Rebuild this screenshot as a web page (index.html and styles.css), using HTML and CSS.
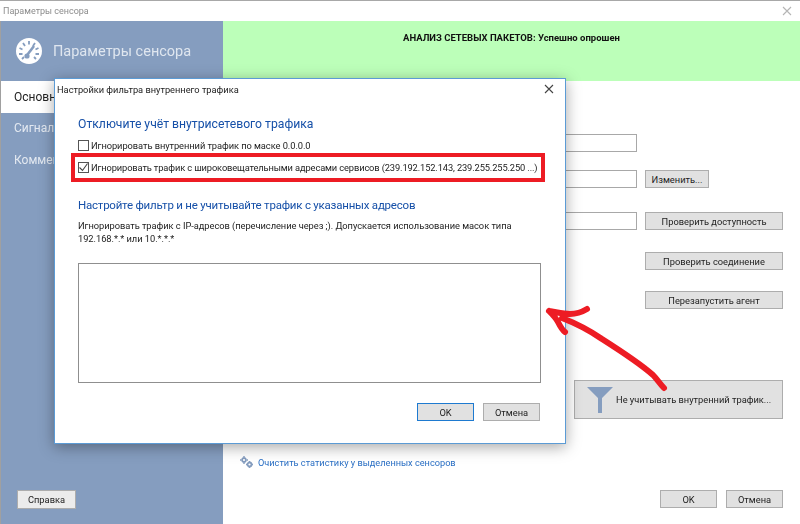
FILE: index.html
```html
<!DOCTYPE html>
<html lang="ru">
<head>
<meta charset="utf-8">
<title>Параметры сенсора</title>
<link rel="stylesheet" href="styles.css">
</head>
<body>
<div class="window">
  <div class="titlebar">
    <span>Параметры сенсора</span>
    <svg class="close-main" viewBox="0 0 10 10" width="10" height="10"><path d="M1 1l8 8M9 1l-8 8"/></svg>
  </div>
  <div class="main">
    <aside class="sidebar">
      <div class="side-head">
        <svg class="dial" viewBox="0 0 26 26" width="26" height="26">
          <circle cx="13" cy="13" r="13" fill="#fff"/>
          <path d="M13 3v3.500M7 5l2 3M3.500 10l3 1.500M3 16h3.500M19 5l-2 3M22.500 10l-3 1.500M23 16h-3.500M6 21l2-2M20 21l-2-2" stroke="#859dbf" stroke-width="1.800" fill="none"/>
          <path d="M10 18.500L18 8" stroke="#859dbf" stroke-width="2.600" fill="none"/>
          <circle cx="11" cy="18" r="2.600" fill="#859dbf"/>
        </svg>
        <span>Параметры сенсора</span>
      </div>
      <nav class="nav">
        <div class="nav-item active">Основные</div>
        <div class="nav-item">Сигналы</div>
        <div class="nav-item">Комментарии</div>
      </nav>
      <div class="side-foot"><button class="btn help">Справка</button></div>
    </aside>
    <section class="content">
      <div class="status">АНАЛИЗ СЕТЕВЫХ ПАКЕТОВ: Успешно опрошен</div>
      <div class="form">
        <div class="row row-a"><input class="field" type="text"></div>
        <div class="row row-b"><input class="field" type="text"><button class="btn change">Изменить...</button></div>
        <div class="row row-c"><input class="field" type="text"><button class="btn">Проверить доступность</button></div>
        <div class="row row-d"><span></span><button class="btn">Проверить соединение</button></div>
        <div class="row row-e"><span></span><button class="btn">Перезапустить агент</button></div>
        <div class="big-wrap">
          <button class="btn big">
            <svg viewBox="0 0 26 26" width="26" height="26"><path d="M0 0h26L15 11v15h-4V11z" fill="#859dbf"/></svg>
            <span>Не учитывать внутренний трафик...</span>
          </button>
        </div>
        <div class="link">
          <svg viewBox="0 0 13 12" width="13" height="12"><g fill="none" stroke="#859dbf" stroke-width="1.8"><circle cx="4" cy="4" r="2"/><circle cx="9.500" cy="8.500" r="2"/></g><path d="M4 0v1M4 7v1M0 4h1M7 4h1M9.500 5v1M9.500 11v1M6 8.500h1M12 8.500h1" stroke="#859dbf" stroke-width="1.400"/></svg>
          <span>Очистить статистику у выделенных сенсоров</span>
        </div>
        <div class="foot"><button class="btn small">OK</button><button class="btn small">Отмена</button></div>
      </div>
    </section>
  </div>
</div>

<div class="dialog">
  <div class="dlg-title">
    <span>Настройки фильтра внутреннего трафика</span>
    <svg viewBox="0 0 10 10" width="10" height="10"><path d="M1 1l8 8M9 1l-8 8"/></svg>
  </div>
  <div class="dlg-body">
    <h2 class="h-first">Отключите учёт внутрисетевого трафика</h2>
    <label class="check plain"><span class="box"></span><span>Игнорировать внутренний трафик по маске 0.0.0.0</span></label>
    <label class="check marked"><span class="box"><svg viewBox="0 0 11 11" width="11" height="11"><path d="M1.500 5.500l3 3 5-7" fill="none" stroke="#444" stroke-width="1.100"/></svg></span><span>Игнорировать трафик с широковещательными адресами сервисов (239.192.152.143, 239.255.255.250 ...)</span></label>
    <h2 class="h-second">Настройте фильтр и не учитывайте трафик с указанных адресов</h2>
    <p class="hint">Игнорировать трафик с IP-адресов (перечисление через ;). Допускается использование масок типа<br>192.168.*.* или 10.*.*.*</p>
    <div class="area"></div>
    <div class="dlg-foot"><button class="btn small default">OK</button><button class="btn small">Отмена</button></div>
  </div>
</div>

<svg class="arrow" viewBox="0 0 800 524" width="800" height="524">
  <path d="M549 311c7 1 14 3 21 3 6 0 12-2 17-5M549 311c4 4 7 7 9 11 2 4 4 8 7 10M562 318c13 5 27 12 40 21 22 14 42 28 51 36 4 4 7 9 11 13" fill="none" stroke="#ed1c24" stroke-width="6" stroke-linecap="round" stroke-linejoin="round"/>
</svg>
</body>
</html>
```
FILE: styles.css
```css
* { box-sizing: border-box; }
html, body { margin: 0; padding: 0; }
body {
  width: 800px;
  height: 524px;
  overflow: hidden;
  position: relative;
  background: #fff;
  font-family: Roboto, "Noto Sans", sans-serif;
  font-size: 9.300px;
  color: #222;
  filter: blur(.3px);
}
.window {
  width: 800px;
  height: 524px;
  display: flex;
  flex-direction: column;
  border-top: 1px solid #a8a8a8;
}
.titlebar {
  height: 20px;
  flex: none;
  display: flex;
  align-items: center;
  justify-content: space-between;
  padding: 0 8px 0 3px;
  font-size: 9px;
  color: #8c8c8c;
}
.titlebar svg path, .dlg-title svg path { fill: none; stroke: #444; stroke-width: 1.100; }
.close-main path { stroke: #b5b5b5 !important; }
.main { flex: 1; display: flex; min-height: 0; }
.sidebar {
  width: 223px;
  flex: none;
  background: #859dbf;
  display: flex;
  flex-direction: column;
  border-left: 1px solid #a0a0a0;
}
.side-head {
  height: 60px;
  flex: none;
  display: flex;
  align-items: center;
  gap: 11px;
  padding-left: 15px;
  font-size: 14.500px;
  color: #dfe6ef;
}
.nav-item {
  height: 31.500px;
  display: flex;
  align-items: center;
  padding-left: 13px;
  font-size: 12px;
  color: #e3e9f1;
}
.nav-item.active { background: #fff; color: #222; }
.side-foot { margin-top: auto; padding: 0 0 15px 16px; }
.btn {
  font: inherit;
  height: 18px;
  padding: 0;
  background: #e1e1e1;
  border: 1px solid #adadad;
  color: #222;
  display: block;
}
.help { width: 59px; height: 19px; background: #ececec; }
.content { flex: 1; display: flex; flex-direction: column; }
.status {
  height: 60px;
  flex: none;
  background: #bcffb9;
  padding-top: 11px;
  padding-left: 180px;
  font-weight: 700;
  font-size: 9.500px;
  color: #111;
}
.form { flex: 1; display: flex; flex-direction: column; padding-right: 17px; }
.row {
  display: grid;
  grid-template-columns: 1fr 138px;
  column-gap: 8px;
  height: 18px;
  padding-left: 120px;
}
.row-a { margin-top: 53px; }
.row-b { margin-top: 18px; }
.row-c { margin-top: 24px; }
.row-d { margin-top: 22px; }
.row-e { margin-top: 21px; }
.field {
  height: 18px;
  border: 1px solid #a8a8a8;
  background: #fff;
  padding: 0;
}
.change { width: 64px; }
.big-wrap { display: flex; justify-content: flex-end; margin-top: 71px; }
.big {
  width: 209px;
  height: 39px;
  display: flex;
  align-items: center;
  gap: 3px;
  padding-left: 12px;
  white-space: nowrap;
}
.link {
  display: flex;
  align-items: center;
  gap: 5px;
  margin: 36px 0 0 17px;
  font-size: 9.200px;
  color: #2a6fc4;
  height: 14px;
}
.foot { display: flex; justify-content: flex-end; gap: 9px; margin-top: auto; padding-bottom: 16px; }
.small { width: 57px; }

.dialog {
  position: absolute;
  left: 54px;
  top: 78px;
  width: 512px;
  height: 366px;
  background: #fff;
  border: 1px solid #5b9bd5;
  box-shadow: 0 3px 14px rgba(0, 0, 0, .35);
  display: flex;
  flex-direction: column;
}
.dlg-title {
  height: 20px;
  flex: none;
  display: flex;
  align-items: center;
  justify-content: space-between;
  padding: 0 11px 0 2px;
  font-size: 9.250px;
  color: #222;
}
.dlg-body { flex: 1; padding: 0 24px 0 23px; display: flex; flex-direction: column; }
h2 {
  margin: 0;
  font-weight: 400;
  line-height: 17px;
  color: #1650a8;
}
.h-first { margin-top: 17px; font-size: 12.200px; }
.h-second { margin-top: 15px; font-size: 11.500px; letter-spacing: -.22px; }
.check {
  display: flex;
  align-items: center;
  gap: 2px;
  height: 14px;
  font-size: 9.300px;
  letter-spacing: -.12px;
  white-space: nowrap;
}
.plain { margin-top: 5px; letter-spacing: -.06px; }
.marked {
  height: 29px;
  width: 474px;
  margin: 1px 0 0 -7px;
  padding-left: 3px;
  border: 4px solid #ed1c24;
}
.box {
  width: 11px;
  height: 11px;
  flex: none;
  border: 1px solid #555;
  display: block;
}
.box svg { display: block; margin: -1px 0 0 -1px; }
.hint { margin: 5px 0 0; font-size: 9.300px; letter-spacing: -.04px; line-height: 13px; }
.area {
  height: 120px;
  margin-top: 18px;
  border: 1px solid #8f8f8f;
  flex: none;
}
.dlg-foot { display: flex; justify-content: flex-end; gap: 9px; margin-top: 20px; padding-right: 1px; }
.default { border: 1.500px solid #1e7ad0; }
.arrow { position: absolute; left: 0; top: 0; pointer-events: none; }
```
